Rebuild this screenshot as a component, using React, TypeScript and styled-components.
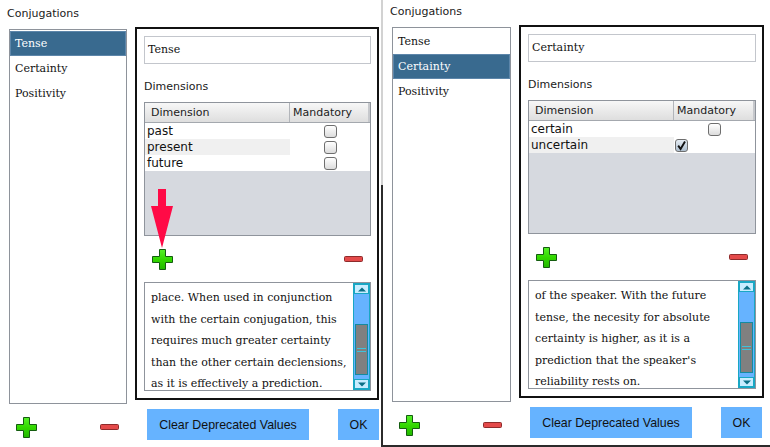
import React from 'react';
import styled, { createGlobalStyle } from 'styled-components';

const Global = createGlobalStyle`
  html, body { margin: 0; padding: 0; background: #fff; }
  body { width: 770px; height: 447px; overflow: hidden; font-family: "DejaVu Sans", sans-serif; }
`;

const Page = styled.div`
  display: flex;
  width: 770px;
  height: 447px;
  background: #fff;
`;

const Window = styled.div<{ $width: number; $top: number; $framed?: boolean }>`
  box-sizing: border-box;
  width: ${(p) => p.$width}px;
  height: 447px;
  padding: ${(p) => p.$top}px 0 0 7px;
  display: flex;
  flex-direction: column;
  background: #fff;
  ${(p) => (p.$framed ? 'border-bottom: 2px solid #2b2b2b;' : '')}
`;

const Divider = styled.div`
  width: 2px;
  height: 447px;
  background: linear-gradient(to bottom, #d2d2d2 0, #d2d2d2 185px, #2b2b2b 185px);
`;

const Title = styled.div`
  height: 16px;
  line-height: 16px;
  font-size: 11px;
  color: #1a1a1a;
`;

const Body = styled.div`
  display: flex;
  align-items: flex-start;
  gap: 8px;
  margin-top: 5px;
`;

const List = styled.div<{ $width: number }>`
  box-sizing: border-box;
  width: ${(p) => p.$width}px;
  height: 375px;
  margin: 2px 0 0 2px;
  padding-top: 1px;
  border: 1px solid #8e939b;
  background: #fff;
`;

const ListItem = styled.div<{ $selected?: boolean }>`
  box-sizing: border-box;
  height: 25px;
  line-height: 23px;
  padding-left: 4px;
  font-family: "DejaVu Serif", serif;
  font-size: 11px;
  color: ${(p) => (p.$selected ? '#fff' : '#111')};
  background: ${(p) => (p.$selected ? '#396a8f' : 'transparent')};
  border: 1px solid ${(p) => (p.$selected ? '#5d86aa' : 'transparent')};
`;

const Panel = styled.div<{ $width: number }>`
  position: relative;
  box-sizing: border-box;
  width: ${(p) => p.$width}px;
  height: 373px;
  border: 2px solid #111;
  padding: 7px 6px 0 7px;
  display: flex;
  flex-direction: column;
`;

const TextField = styled.div`
  box-sizing: border-box;
  height: 28px;
  border: 1px solid #c3c6cc;
  padding-left: 3px;
  line-height: 26px;
  font-family: "DejaVu Serif", serif;
  font-size: 11px;
  color: #111;
`;

const Label = styled.div`
  margin-top: 16px;
  line-height: 14px;
  font-size: 11px;
  color: #1a1a1a;
`;

const Table = styled.div`
  box-sizing: border-box;
  margin-top: 8px;
  height: 134px;
  border: 1px solid #8f949c;
  display: flex;
  flex-direction: column;
`;

const HeaderRow = styled.div`
  display: grid;
  grid-template-columns: 145px 1fr;
  height: 20px;
  box-sizing: border-box;
  border-bottom: 1px solid #a4a8ae;
  background: linear-gradient(to bottom, #f7f7f7, #dedede);
`;

const HeaderCell = styled.div<{ $first?: boolean }>`
  padding-left: ${(p) => (p.$first ? 6 : 3)}px;
  line-height: 19px;
  font-size: 11px;
  color: #222;
  ${(p) => (p.$first ? 'border-right: 1px solid #b2b5ba;' : 'border-right: 2px solid #c6c8cc;')}
`;

const Row = styled.div`
  display: grid;
  grid-template-columns: 145px 1fr;
  height: 16px;
  background: #fff;
`;

const NameCell = styled.div<{ $alt?: boolean }>`
  padding-left: 2px;
  line-height: 16px;
  font-size: 12px;
  color: #111;
  background: ${(p) => (p.$alt ? '#f0f0f0' : '#fff')};
`;

const CheckCell = styled.div<{ $align: 'center' | 'start' }>`
  display: flex;
  align-items: center;
  justify-content: ${(p) => (p.$align === 'center' ? 'center' : 'flex-start')};
  padding-left: ${(p) => (p.$align === 'center' ? 0 : 1)}px;
`;

const Box = styled.div<{ $checked?: boolean }>`
  box-sizing: border-box;
  width: 13px;
  height: 13px;
  border: 1px solid #6e6e6e;
  border-radius: 3px;
  background: ${(p) =>
    p.$checked ? 'linear-gradient(to bottom, #e6edf4, #aebfcf)' : 'linear-gradient(to bottom, #ffffff, #dcdcdc)'};
  display: flex;
  align-items: center;
  justify-content: center;
`;

const Filler = styled.div`
  flex: 1;
  background: #d6d9df;
`;

const ActionRow = styled.div`
  margin-top: 13px;
  height: 20px;
  padding: 0 8px;
  display: flex;
  align-items: center;
  justify-content: space-between;
`;

const TextArea = styled.div`
  box-sizing: border-box;
  margin-top: 13px;
  height: 109px;
  border: 1px solid #8f949c;
  display: flex;
`;

const AreaText = styled.div`
  flex: 1;
  padding: 4px 0 0 6px;
  line-height: 21.5px;
  white-space: pre;
  overflow: hidden;
  font-family: "DejaVu Serif", serif;
  font-size: 11px;
  color: #111;
`;

const ScrollBar = styled.div`
  box-sizing: border-box;
  width: 17px;
  display: flex;
  flex-direction: column;
  background: #66b3ff;
  border: 1px solid #19a7c4;
`;

const ScrollButton = styled.div`
  box-sizing: border-box;
  height: 10px;
  background: #c8edff;
  border: 1px solid #19a7c4;
  display: flex;
  align-items: center;
  justify-content: center;
`;

const Track = styled.div`
  flex: 1;
  display: flex;
  flex-direction: column;
  padding: 0 1px;
`;

const Thumb = styled.div<{ $offset: number }>`
  box-sizing: border-box;
  margin-top: ${(p) => p.$offset}px;
  height: 51px;
  background: #808080;
  border: 1px solid #148aa0;
  display: flex;
  align-items: center;
  justify-content: center;
`;

const Grip = styled.div`
  box-sizing: border-box;
  width: 9px;
  height: 4px;
  border-top: 1px solid #3fc2da;
  border-bottom: 1px solid #3fc2da;
`;

const Footer = styled.div`
  display: flex;
  align-items: center;
  height: 31px;
  margin-top: 5px;
`;

const FooterIcon = styled.div<{ $gap: number; $shift: number }>`
  display: flex;
  margin-left: ${(p) => p.$gap}px;
  margin-top: ${(p) => p.$shift}px;
`;

const Button = styled.button<{ $width: number; $gap: number }>`
  box-sizing: border-box;
  width: ${(p) => p.$width}px;
  height: 31px;
  margin-left: ${(p) => p.$gap}px;
  border: none;
  padding: 0;
  background: #66b3ff;
  color: #111;
  font-family: "Liberation Sans", Arial, sans-serif;
  font-size: 12.4px;
`;

const Pointer = styled.svg`
  position: absolute;
  left: 14px;
  top: 160px;
`;

const Plus = () => (
  <svg width="21" height="21" viewBox="0 0 21 21">
    <defs>
      <linearGradient id="pg" x1="0" y1="0" x2="0" y2="1">
        <stop offset="0" stopColor="#56f02a" />
        <stop offset="0.5" stopColor="#33d800" />
        <stop offset="1" stopColor="#22b800" />
      </linearGradient>
    </defs>
    <polygon
      points="7.5,0.5 13.5,0.5 13.5,7.5 20.5,7.5 20.5,13.5 13.5,13.5 13.5,20.5 7.5,20.5 7.5,13.5 0.5,13.5 0.5,7.5 7.5,7.5"
      fill="url(#pg)"
      stroke="#145c10"
      strokeWidth="1"
    />
  </svg>
);

const Minus = () => (
  <svg width="19" height="6" viewBox="0 0 19 6">
    <rect x="0.5" y="0.5" width="18" height="5" rx="1" fill="#e44a4a" stroke="#8d2b2b" strokeWidth="1" />
  </svg>
);

const Check = () => (
  <svg width="11" height="11" viewBox="0 0 11 11">
    <path d="M2.2 5.6 L4.6 9 L9 1.6" fill="none" stroke="#111" strokeWidth="1.9" />
  </svg>
);

const Arrow = ({ down }: { down?: boolean }) => (
  <svg width="8" height="5" viewBox="0 0 8 5">
    <polygon points={down ? '0,0.5 8,0.5 4,4.5' : '0,4.5 8,4.5 4,0.5'} fill="#0b6f86" />
  </svg>
);

type Dim = { name: string; checked: boolean; align: 'center' | 'start' };

type Conf = {
  width: number;
  top: number;
  framed?: boolean;
  listWidth: number;
  panelWidth: number;
  selected: string;
  field: string;
  dims: Dim[];
  text: string;
  thumb: number;
  pointer?: boolean;
};

const ConjugationWindow = ({ c }: { c: Conf }) => (
  <Window $width={c.width} $top={c.top} $framed={c.framed}>
    <Title>Conjugations</Title>
    <Body>
      <List $width={c.listWidth}>
        {['Tense', 'Certainty', 'Positivity'].map((n) => (
          <ListItem key={n} $selected={n === c.selected}>
            {n}
          </ListItem>
        ))}
      </List>
      <Panel $width={c.panelWidth}>
        <TextField>{c.field}</TextField>
        <Label>Dimensions</Label>
        <Table>
          <HeaderRow>
            <HeaderCell $first>Dimension</HeaderCell>
            <HeaderCell>Mandatory</HeaderCell>
          </HeaderRow>
          {c.dims.map((d, i) => (
            <Row key={d.name}>
              <NameCell $alt={i % 2 === 1}>{d.name}</NameCell>
              <CheckCell $align={d.align}>
                <Box $checked={d.checked}>{d.checked && <Check />}</Box>
              </CheckCell>
            </Row>
          ))}
          <Filler />
        </Table>
        <ActionRow>
          <Plus />
          <Minus />
        </ActionRow>
        <TextArea>
          <AreaText>{c.text}</AreaText>
          <ScrollBar>
            <ScrollButton>
              <Arrow />
            </ScrollButton>
            <Track>
              <Thumb $offset={c.thumb}>
                <Grip />
              </Thumb>
            </Track>
            <ScrollButton>
              <Arrow down />
            </ScrollButton>
          </ScrollBar>
        </TextArea>
        {c.pointer && (
          <Pointer width="22" height="59" viewBox="0 0 22 59">
            <polygon points="7,0 15,0 15,17 22,17 11,59 0,17 7,17" fill="#ff0a46" />
          </Pointer>
        )}
      </Panel>
    </Body>
    <Footer>
      <FooterIcon $gap={9} $shift={5}>
        <Plus />
      </FooterIcon>
      <FooterIcon $gap={63} $shift={4}>
        <Minus />
      </FooterIcon>
      <Button $width={162} $gap={28}>
        Clear Deprecated Values
      </Button>
      <Button $width={41} $gap={29}>
        OK
      </Button>
    </Footer>
  </Window>
);

const left: Conf = {
  width: 381,
  top: 6,
  listWidth: 118,
  panelWidth: 244,
  selected: 'Tense',
  field: 'Tense',
  dims: [
    { name: 'past', checked: false, align: 'center' },
    { name: 'present', checked: false, align: 'center' },
    { name: 'future', checked: false, align: 'center' },
  ],
  text:
    'place. When used in conjunction\nwith the certain conjugation, this\nrequires much greater certainty\nthan the other certain declensions,\nas it is effectively a prediction.',
  thumb: 30,
  pointer: true,
};

const right: Conf = {
  width: 387,
  top: 4,
  framed: true,
  listWidth: 119,
  panelWidth: 245,
  selected: 'Certainty',
  field: 'Certainty',
  dims: [
    { name: 'certain', checked: false, align: 'center' },
    { name: 'uncertain', checked: true, align: 'start' },
  ],
  text:
    "of the speaker. With the future\ntense, the necesity for absolute\ncertainty is higher, as it is a\nprediction that the speaker's\nreliability rests on.",
  thumb: 30,
};

export default function App() {
  return (
    <>
      <Global />
      <Page>
        <ConjugationWindow c={left} />
        <Divider />
        <ConjugationWindow c={right} />
      </Page>
    </>
  );
}
